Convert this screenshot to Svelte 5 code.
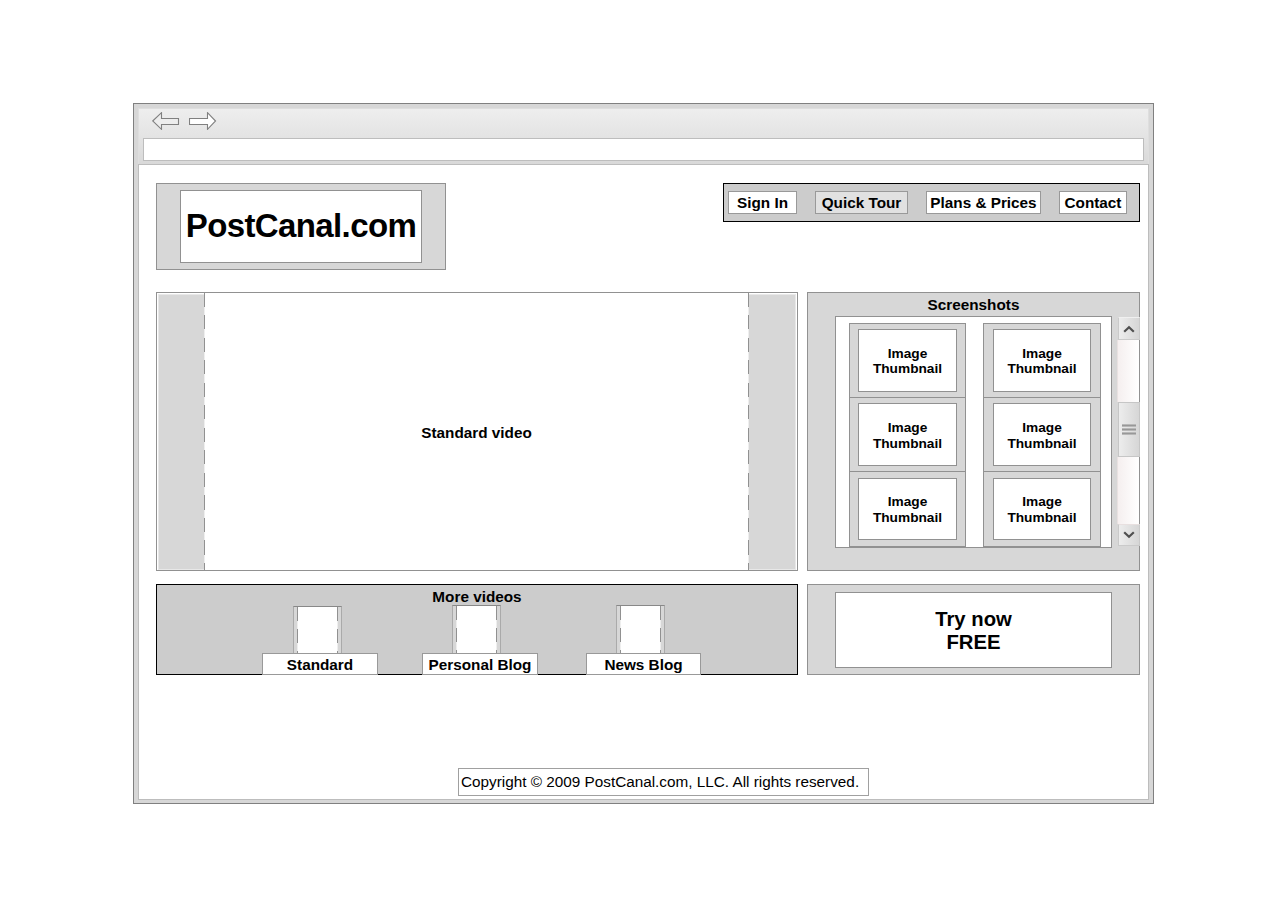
<script>
  const nav = [
    { label: 'Sign In', width: 69 },
    { label: 'Quick Tour', width: 93, active: true },
    { label: 'Plans & Prices', width: 115 },
    { label: 'Contact', width: 68 }
  ];
  const columns = ['first', 'second'];
  const rows = [0, 1, 2];
  const clips = [
    { label: 'Standard', width: 116 },
    { label: 'Personal Blog', width: 116 },
    { label: 'News Blog', width: 115 }
  ];
</script>

<div class="window">
  <div class="chrome">
    <div class="arrows">
      <svg width="28" height="18" viewBox="0 0 28 18"><path d="M.7 9 9.5.7V6.500H26.500V12.500H9.500V17.300Z" fill="#ededed" stroke="#808080" stroke-width="1.100" /></svg>
      <svg width="28" height="18" viewBox="0 0 28 18"><path d="M26.500 9 18.500.7V6.500H.5V12.500H18.500V17.300Z" fill="#fff" stroke="#808080" stroke-width="1.100" /></svg>
    </div>
    <div class="address"></div>
  </div>

  <main class="page">
    <header>
      <div class="logo"><h1>PostCanal.com</h1></div>
      <nav>
        {#each nav as item}
          <a class:active={item.active} style="width: {item.width}px">{item.label}</a>
        {/each}
      </nav>
    </header>

    <div class="feature">
      <section class="video">
        <div class="side"></div>
        <div class="dash"></div>
        <div class="stage">Standard video</div>
        <div class="dash"></div>
        <div class="side right"></div>
      </section>

      <section class="shots">
        <h2>Screenshots</h2>
        <div class="shots-body">
          <div class="gallery">
            {#each columns as column}
              <div class="column {column}">
                {#each rows as row}
                  <div class="thumb" class:last={row === 2}>
                    <div class="thumb-label" class:tight={row === 0}>Image<br />Thumbnail</div>
                  </div>
                {/each}
              </div>
            {/each}
          </div>
          <div class="scrollbar">
            <div class="knob">
              <svg width="12" height="8" viewBox="0 0 12 8"><path d="M1.200 6.800 6 2.200 10.800 6.800" fill="none" stroke="#505050" stroke-width="2.200" /></svg>
            </div>
            <div class="track upper"></div>
            <div class="grip"><i></i><i></i><i></i></div>
            <div class="track lower"></div>
            <div class="knob down">
              <svg width="12" height="8" viewBox="0 0 12 8"><path d="M1.200 1.200 6 5.800 10.800 1.200" fill="none" stroke="#505050" stroke-width="2.200" /></svg>
            </div>
          </div>
        </div>
      </section>
    </div>

    <div class="lower-row">
      <section class="more">
        <h2>More videos</h2>
        <div class="clips">
          {#each clips as clip}
            <div class="clip" style="width: {clip.width}px">
              <div class="frame">
                <div class="edge"></div>
                <div class="dash small"></div>
                <div class="screen"></div>
                <div class="dash small"></div>
                <div class="edge"></div>
              </div>
              <div class="clip-label">{clip.label}</div>
            </div>
          {/each}
        </div>
      </section>
      <section class="try"><div>Try now<br />FREE</div></section>
    </div>

    <footer>Copyright © 2009 PostCanal.com, LLC. All rights reserved.</footer>
  </main>
</div>

<style>
  :global(body) { margin: 0; background: #fff; }
  :global(#app) { display: flow-root; }
  .window, .window * { box-sizing: border-box; }
  .window {
    width: 1021px;
    height: 701px;
    margin: 103px 0 0 133px;
    padding: 4px;
    border: 1px solid #808080;
    background: #d7d7d7;
    color: #000;
    font: bold 15.300px/17px "Liberation Sans", Arial, sans-serif;
  }
  h1, h2 { margin: 0; }
  .chrome {
    height: 56px;
    padding: 3px 4px 0;
    border: 1px solid #dedede;
    border-width: 1px 1px 0;
    background: linear-gradient(#eee, #d9d9d9);
  }
  .arrows { display: flex; gap: 9px; height: 26px; padding-left: 9px; }
  .arrows svg { display: block; }
  .address { height: 23px; border: 1px solid #bdbdbd; background: #fff; }
  .page {
    height: 636px;
    padding: 18px 8px 0 17px;
    border: 1px solid #bdbdbd;
    background: #fff;
  }
  header { display: flex; justify-content: space-between; align-items: flex-start; height: 87px; }
  .logo {
    display: flex;
    width: 290px;
    height: 87px;
    padding: 6px 23px;
    border: 1px solid #919191;
    background: #d7d7d7;
  }
  h1 {
    flex: 1;
    border: 1px solid #919191;
    background: #fff;
    font-size: 33px;
    letter-spacing: -0.620px;
    line-height: 70px;
    text-align: center;
    white-space: nowrap;
  }
  nav {
    display: flex;
    gap: 18px;
    width: 417px;
    height: 39px;
    padding: 7px 4px;
    border: 1px solid #000;
    background: #ccc;
  }
  nav a {
    height: 23px;
    border: 1px solid #999;
    background: #fff;
    line-height: 22px;
    text-align: center;
    white-space: nowrap;
  }
  nav a.active { background: #e1e1e1; }
  .feature { display: flex; gap: 9px; height: 279px; margin-top: 22px; }
  .video { display: flex; width: 642px; border: 1px solid #919191; }
  .side {
    width: 46px;
    margin: 1px 0 0 1px;
    border: 1px solid #e8e8e8;
    border-right: 0;
    background: #d7d7d7;
  }
  .side.right { width: 47px; margin: 1px 1px 0 0; border-right: 1px solid #e8e8e8; border-left: 0; }
  .stage { flex: 1; line-height: 280px; text-align: center; }
  .dash { width: 1px; background: repeating-linear-gradient(#919191 0 14px, #eee 14px 22.500px); }
  .shots { width: 333px; border: 1px solid #919191; background: #d7d7d7; }
  .shots h2 { height: 23px; font-size: 15.300px; line-height: 23px; text-align: center; }
  .shots-body { display: flex; gap: 5px; padding-left: 27px; margin-right: -1px; }
  .gallery {
    display: flex;
    flex: none;
    gap: 17px;
    width: 277px;
    height: 232px;
    padding: 6px 0 0 13px;
    border: 1px solid #919191;
    background: #fff;
  }
  .column { width: 117px; }
  .column.second { width: 118px; }
  .thumb { height: 75px; padding: 5px 8px 0; border: 1px solid #919191; background: #d7d7d7; }
  .second .thumb { padding: 5px 9px 0; }
  .thumb + .thumb { margin-top: -1px; }
  .column .thumb.last { height: 76px; padding-top: 6px; }
  .thumb-label {
    height: 63px;
    padding-top: 16px;
    border: 1px solid #919191;
    background: #fff;
    font-size: 13.700px;
    line-height: 16px;
    text-align: center;
  }
  .thumb-label.tight { line-height: 15px; }
  .last .thumb-label { height: 62px; padding-top: 15px; }
  .scrollbar { flex: none; width: 23px; height: 231px; padding-top: 1px; }
  .knob, .grip {
    display: flex;
    align-items: center;
    justify-content: center;
    width: 22px;
    height: 22px;
    margin-left: 1px;
    border: 1px solid #cacaca;
    background: linear-gradient(90deg, #ededed, #d6d6d6);
  }
  .knob { height: 23px; padding-right: 1px; border-top-color: #f0f0f0; }
  .knob.down { height: 22px; border-top-color: #e8e0e0; }
  .track { border-right: 1px solid #919191; border-left: 1px solid #e9e1e1; background: linear-gradient(90deg, #f5efef, #fff); }
  .upper { height: 62px; }
  .lower { height: 67px; }
  .grip { flex-direction: column; gap: 1px; height: 55px; padding-right: 1px; border-color: #c6c6c6; }
  .grip i { width: 14px; height: 3px; border-top: 1px solid #b8b8b8; border-bottom: 1px solid #b8b8b8; background: #989898; }
  .lower-row { display: flex; gap: 9px; height: 91px; margin-top: 13px; }
  .more { width: 642px; border: 1px solid #000; background: #ccc; }
  .more h2 { height: 20px; font-size: 15.300px; line-height: 23px; text-align: center; }
  .clips { display: flex; padding-left: 105px; }
  .clip:nth-child(2) { margin-left: 44px; }
  .clip:nth-child(3) { margin-left: 48px; }
  .frame {
    display: flex;
    width: 49px;
    height: 48px;
    margin: 0 0 0 30px;
    border: 1px solid #aaa;
    border-width: 1px 1px 0;
    border-top-color: #888;
  }
  .clip:first-child .frame { height: 47px; margin: 1px 0 0 31px; }
  .edge { width: 3px; background: #d7d7d7; }
  .dash.small { background: repeating-linear-gradient(#919191 0 14px, #eee 14px 22px); }
  .screen { flex: 1; background: #fff; }
  .clip-label {
    height: 22px;
    border: 1px solid #999;
    background: #fff;
    line-height: 22px;
    text-align: center;
    white-space: nowrap;
  }
  .try { width: 333px; padding: 7px 27px; border: 1px solid #919191; background: #d7d7d7; }
  .try div {
    height: 76px;
    padding-top: 15px;
    border: 1px solid #919191;
    background: #fff;
    font-size: 20.300px;
    line-height: 23px;
    text-align: center;
  }
  footer {
    width: 411px;
    height: 28px;
    margin: 93px 0 0 302px;
    padding-left: 2px;
    border: 1px solid #a0a0a0;
    font-weight: normal;
    line-height: 26px;
    white-space: nowrap;
  }
</style>
